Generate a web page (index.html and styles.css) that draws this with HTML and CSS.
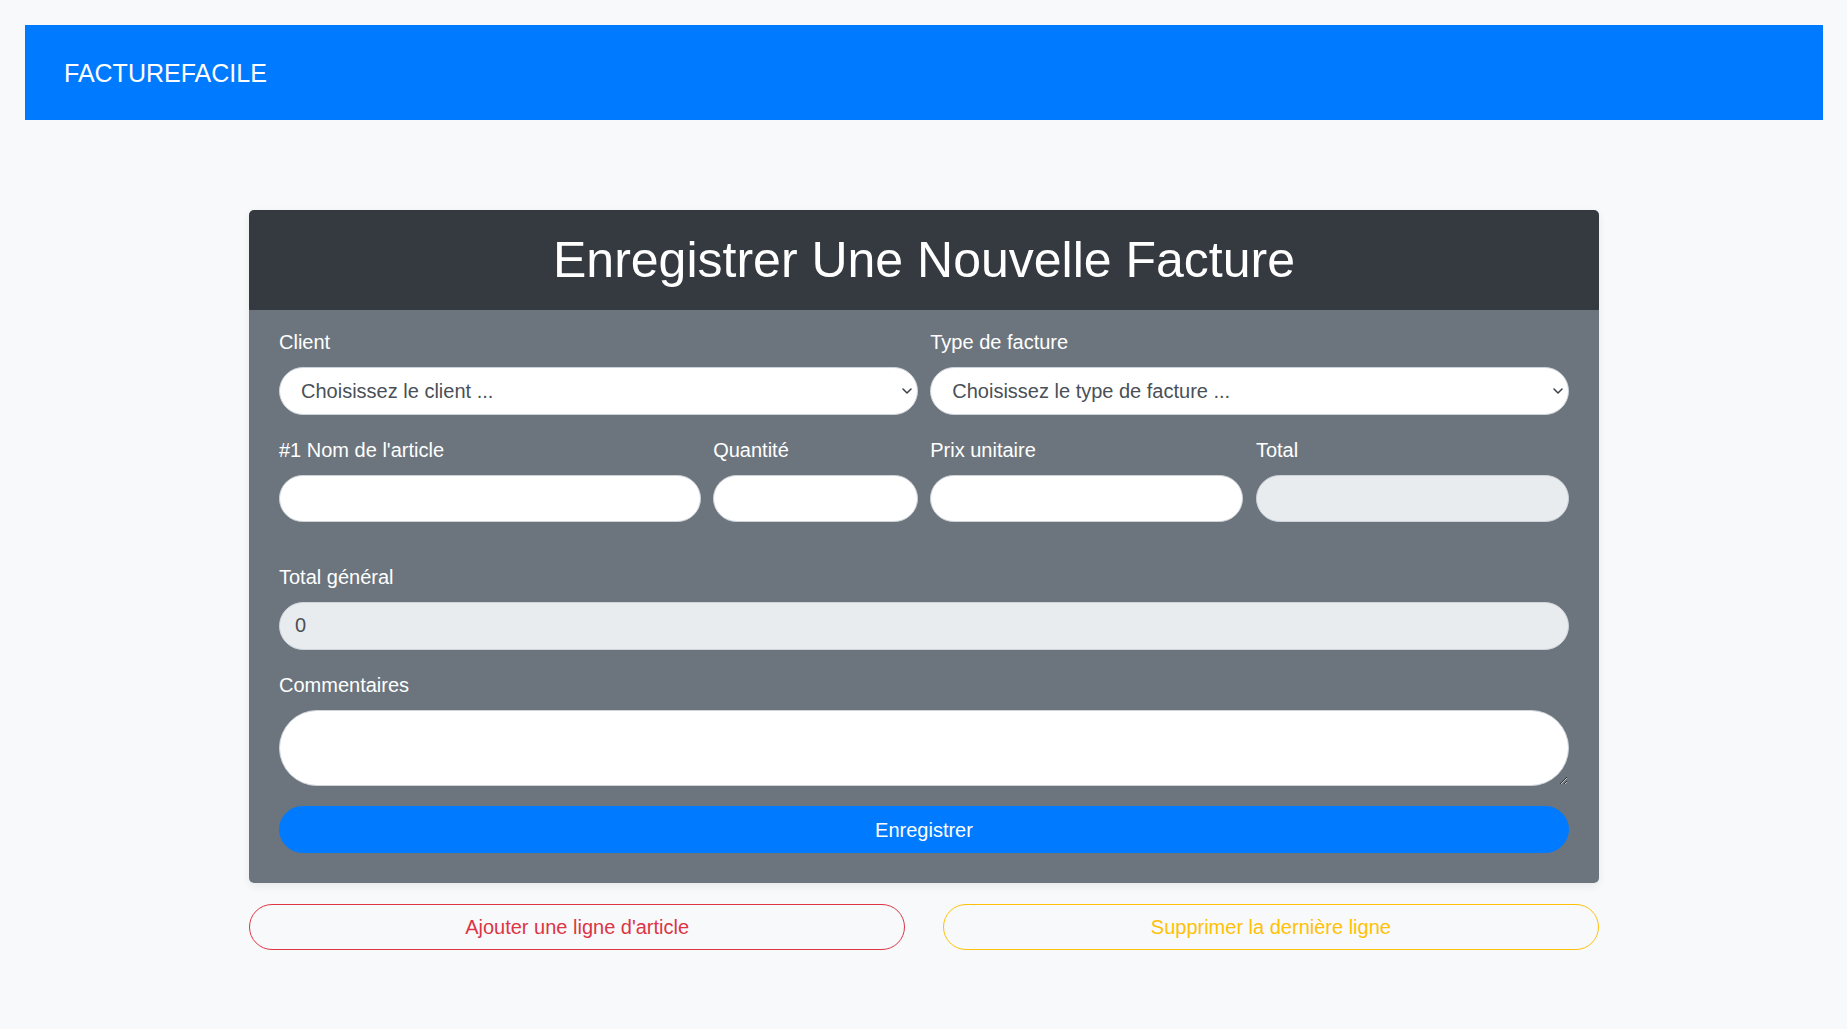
FILE: index.html
```html
<!DOCTYPE html>
<html lang="fr">
<head>
<meta charset="utf-8">
<title>FactureFacile</title>
<link rel="stylesheet" href="styles.css">
</head>
<body>
<div class="page">
  <nav class="navbar">
    <a class="brand" href="#">FACTUREFACILE</a>
  </nav>

  <main class="wrap">
    <section class="card">
      <header class="card-header">
        <h1 class="title">Enregistrer Une Nouvelle Facture</h1>
      </header>
      <form class="card-body">
        <div class="grid row-a">
          <div class="field span-6">
            <label class="label">Client</label>
            <div class="select-wrap">
              <select class="control select">
                <option>Choisissez le client ...</option>
              </select>
              <svg class="chevron" viewBox="0 0 10 6" width="10" height="6" aria-hidden="true"><path d="M1 1 L5 5 L9 1" fill="none" stroke="#3a3f44" stroke-width="1.5" stroke-linecap="round" stroke-linejoin="round"/></svg>
            </div>
          </div>
          <div class="field span-6">
            <label class="label">Type de facture</label>
            <div class="select-wrap">
              <select class="control select">
                <option>Choisissez le type de facture ...</option>
              </select>
              <svg class="chevron" viewBox="0 0 10 6" width="10" height="6" aria-hidden="true"><path d="M1 1 L5 5 L9 1" fill="none" stroke="#3a3f44" stroke-width="1.5" stroke-linecap="round" stroke-linejoin="round"/></svg>
            </div>
          </div>
        </div>

        <div class="grid row-b">
          <div class="field span-4">
            <label class="label">#1 Nom de l'article</label>
            <input class="control" type="text">
          </div>
          <div class="field span-2">
            <label class="label">Quantité</label>
            <input class="control" type="text">
          </div>
          <div class="field span-3">
            <label class="label">Prix unitaire</label>
            <input class="control" type="text">
          </div>
          <div class="field span-3">
            <label class="label">Total</label>
            <input class="control readonly" type="text" readonly>
          </div>
        </div>

        <div class="field block">
          <label class="label">Total général</label>
          <input class="control readonly" type="text" value="0" readonly>
        </div>

        <div class="field block">
          <label class="label">Commentaires</label>
          <textarea class="control textarea"></textarea>
        </div>

        <button type="button" class="btn btn-primary">Enregistrer</button>
      </form>
    </section>

    <div class="actions">
      <button type="button" class="btn btn-outline-danger">Ajouter une ligne d'article</button>
      <button type="button" class="btn btn-outline-warning">Supprimer la dernière ligne</button>
    </div>
  </main>
</div>
</body>
</html>
```

FILE: styles.css
```css
* {
  box-sizing: border-box;
}

html, body {
  margin: 0;
  padding: 0;
  background: #f8f9fa;
}

body {
  font-family: "Liberation Sans", Arial, sans-serif;
  font-size: 20px;
  line-height: 1.5;
  color: #212529;
}

.page {
  padding: 25px 24px 40px 25px;
}

.navbar {
  height: 95px;
  background: #007bff;
  display: flex;
  align-items: center;
  padding: 2px 39px 0;
}

.brand {
  color: #ffffff;
  font-size: 25px;
  text-decoration: none;
  line-height: 1.5;
}

.wrap {
  width: 1350px;
  margin: 90px auto 0;
}

.card {
  border-radius: 5px;
  overflow: hidden;
  box-shadow: 0 3px 8px rgba(0, 0, 0, 0.07);
}

.card-header {
  background: #343a40;
  padding: 20px 25px 20px;
  text-align: center;
}

.title {
  margin: 0;
  font-size: 50px;
  font-weight: 400;
  line-height: 60px;
  color: #ffffff;
}

.card-body {
  background: #6c757d;
  padding: 17px 30px 30px;
}

.grid {
  display: grid;
  grid-template-columns: repeat(12, 1fr);
  column-gap: 12.5px;
}

.row-a {
  margin-bottom: 20px;
}

.row-b {
  margin-bottom: 40px;
}

.span-6 { grid-column: span 6; }
.span-4 { grid-column: span 4; }
.span-3 { grid-column: span 3; }
.span-2 { grid-column: span 2; }

.block {
  margin-bottom: 20px;
}

.label {
  display: block;
  color: #ffffff;
  line-height: 30px;
  margin-bottom: 10px;
}

.control {
  display: block;
  width: 100%;
  height: 47.5px;
  padding: 7.5px 15px;
  font-family: inherit;
  font-size: 20px;
  line-height: 1.5;
  color: #495057;
  background: #ffffff;
  border: 1.25px solid #ced4da;
  border-radius: 50rem;
  outline: none;
}

.select-wrap {
  position: relative;
}

.select {
  appearance: none;
  -webkit-appearance: none;
  padding-left: 21px;
  padding-right: 30px;
}

.chevron {
  position: absolute;
  right: 6px;
  top: 21px;
  pointer-events: none;
}

.readonly {
  background: #e9ecef;
}

.textarea {
  height: 76.5px;
  resize: vertical;
}

.btn {
  display: block;
  width: 100%;
  height: 47px;
  font-family: inherit;
  font-size: 20px;
  line-height: 1.5;
  text-align: center;
  border-radius: 50rem;
  cursor: pointer;
  padding: 0 15px;
}

.btn-primary {
  background: #007bff;
  border: 1.25px solid #007bff;
  color: #ffffff;
}

.actions {
  margin-top: 21px;
  display: grid;
  grid-template-columns: 1fr 1fr;
  column-gap: 37.5px;
}

.actions .btn {
  height: 46px;
  background: transparent;
}

.btn-outline-danger {
  border: 1.25px solid #dc3545;
  color: #dc3545;
}

.btn-outline-warning {
  border: 1.25px solid #ffc107;
  color: #ffc107;
}
```
